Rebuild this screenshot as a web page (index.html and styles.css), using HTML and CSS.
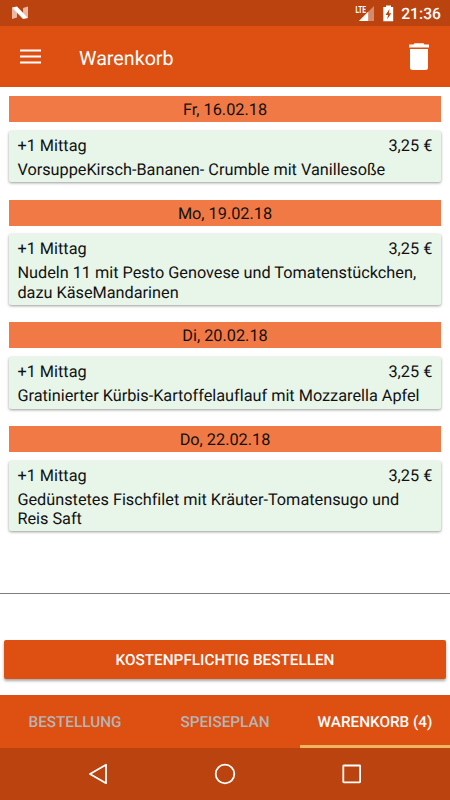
FILE: index.html
```
<!DOCTYPE html>
<html lang="de">
<head>
    <meta charset="UTF-8">
    <meta name="viewport" content="width=device-width, initial-scale=1.0">
    <title>Warenkorb</title>
    <link rel="stylesheet" href="styles.css">
</head>
<body>
    <div class="statusbar">
        <svg class="logo" width="18" height="14" viewBox="0 0 18 14">
            <path d="M1 1.5L6 5V11.5L1 13ZM12 2L17 0.5V12L12 8Z" fill="#e9b9a4"/>
            <path d="M1 1.5L6 0.5L17 12L12 13Z" fill="#fff"/>
        </svg>
        <div class="status-icons">
            <svg width="20" height="17" viewBox="0 0 20 17">
                <path d="M19 1V16H4Z" fill="#d58a6b"/>
                <path d="M13.2 6.8V16H4Z" fill="#fff"/>
                <text class="lte" x="0.5" y="8" textLength="10.5" lengthAdjust="spacingAndGlyphs">LTE</text>
            </svg>
            <svg class="battery" width="11" height="17" viewBox="0 0 11 17">
                <path d="M3 0.5H8V2H10.2V16.3H0.3V2H3Z" fill="#fff"/>
                <path d="M6.5 4L2.5 10H5L4.2 14.3L8.3 8.3H5.9Z" fill="#bb430f"/>
            </svg>
            <span class="time">21:36</span>
        </div>
    </div>

    <header class="toolbar">
        <svg class="menu" width="21" height="15" viewBox="0 0 21 15">
            <path d="M0 1.5H21M0 7.5H21M0 13.5H21" stroke="#fff" stroke-width="2.2"/>
        </svg>
        <h1>Warenkorb</h1>
        <svg class="trash" width="22" height="28" viewBox="0 0 22 28">
            <path d="M1 1.5H5.5L6.5 0.3H15.5L16.5 1.5H21V4.5H1Z" fill="#fff"/>
            <path d="M2 6H20V24.5Q20 27 17.5 27H4.5Q2 27 2 24.5Z" fill="#fff"/>
        </svg>
    </header>

    <main class="cart">
        <section class="day">
            <h2>Fr, 16.02.18</h2>
            <div class="card">
                <div class="row"><span>+1 Mittag</span><span>3,25 €</span></div>
                <p>VorsuppeKirsch-Bananen- Crumble mit Vanillesoße</p>
            </div>
        </section>
        <section class="day">
            <h2>Mo, 19.02.18</h2>
            <div class="card">
                <div class="row"><span>+1 Mittag</span><span>3,25 €</span></div>
                <p>Nudeln 11 mit Pesto Genovese und Tomatenstückchen,<br>dazu KäseMandarinen</p>
            </div>
        </section>
        <section class="day">
            <h2>Di, 20.02.18</h2>
            <div class="card">
                <div class="row"><span>+1 Mittag</span><span>3,25 €</span></div>
                <p>Gratinierter Kürbis-Kartoffelauflauf mit Mozzarella Apfel</p>
            </div>
        </section>
        <section class="day">
            <h2>Do, 22.02.18</h2>
            <div class="card">
                <div class="row"><span>+1 Mittag</span><span>3,25 €</span></div>
                <p>Gedünstetes Fischfilet mit Kräuter-Tomatensugo und<br>Reis Saft</p>
            </div>
        </section>
    </main>

    <div class="order">
        <button type="button">KOSTENPFLICHTIG BESTELLEN</button>
    </div>

    <nav class="tabs">
        <div class="tab">BESTELLUNG</div>
        <div class="tab">SPEISEPLAN</div>
        <div class="tab active">WARENKORB (4)</div>
    </nav>

    <div class="navbar">
        <svg width="22" height="22" viewBox="0 0 22 22">
            <path d="M19 1.8V20.2L3 11Z"/>
        </svg>
        <svg width="22" height="22" viewBox="0 0 22 22">
            <circle cx="11" cy="11" r="9.3"/>
        </svg>
        <svg width="22" height="22" viewBox="0 0 22 22">
            <rect x="2.3" y="2.5" width="16.8" height="16.8" rx="0.5"/>
        </svg>
    </div>
</body>
</html>
```
FILE: styles.css
```
* {
    box-sizing: border-box;
}

body {
    margin: 0;
    height: 800px;
    display: flex;
    flex-direction: column;
    overflow: hidden;
    background-color: #fff;
    color: #111;
    font-family: Roboto, sans-serif;
    font-size: 16.3px;
    text-rendering: geometricPrecision;
}

h1, h2, p {
    margin: 0;
    font-weight: normal;
}

svg {
    display: block;
    flex: none;
}

.statusbar {
    height: 26px;
    flex: none;
    display: flex;
    align-items: center;
    justify-content: space-between;
    padding: 0 9px 0 11px;
    background-color: #bb430f;
    color: #fff;
}

.status-icons {
    display: flex;
    align-items: center;
}

.lte {
    font-size: 10px;
    font-weight: bold;
    fill: #fff;
}

.battery {
    margin: 0 7px 0 8px;
}

.time {
    font-size: 15.7px;
    font-weight: 500;
    line-height: 20px;
    padding-top: 2px;
}

.toolbar {
    height: 61px;
    flex: none;
    display: flex;
    align-items: center;
    padding: 0 20px;
    background-color: #de4f12;
    color: #fff;
}

.toolbar h1 {
    flex: 1;
    margin-left: 38px;
    font-size: 19.7px;
    padding-top: 3px;
}

.cart {
    height: 507px;
    flex: none;
    padding: 9.3px 9px 0;
    border-bottom: 1px solid #7d7d7d;
}

.day {
    margin-bottom: 17.3px;
}

.day h2 {
    height: 26px;
    margin-bottom: 8.7px;
    background-color: #f17945;
    font-size: 16.3px;
    line-height: 28px;
    text-align: center;
}

.card {
    padding: 5px 8.7px 3.3px 8.4px;
    border-radius: 2px;
    background-color: #e8f5e9;
    box-shadow: 0 1px 3px rgba(0, 0, 0, 0.4);
    line-height: 19.2px;
}

.row {
    display: flex;
    justify-content: space-between;
    margin-bottom: 4.8px;
}

.card p {
    letter-spacing: -0.01px;
    white-space: nowrap;
}

.order {
    flex: 1;
    padding: 46px 4px 0;
}

.order button {
    display: block;
    width: 100%;
    height: 39px;
    padding: 1px 0 0;
    border: none;
    border-radius: 2px;
    background-color: #de4f12;
    box-shadow: 0 2px 3px rgba(0, 0, 0, 0.35);
    color: #fff;
    font: 500 15.3px Roboto, sans-serif;
    text-rendering: inherit;
}

.tabs {
    height: 53px;
    flex: none;
    display: flex;
    background-color: #de4f12;
}

.tab {
    flex: 1;
    padding-top: 1px;
    border-bottom: 3px solid transparent;
    color: #b5b5b5;
    font-size: 15.3px;
    font-weight: 500;
    line-height: 53px;
    text-align: center;
    white-space: nowrap;
}

.tab.active {
    border-color: #efb660;
    color: #fff;
}

.navbar {
    height: 52px;
    flex: none;
    display: flex;
    align-items: center;
    justify-content: center;
    gap: 105px;
    background-color: #bb430f;
}

.navbar svg {
    fill: none;
    stroke: #fff;
    stroke-width: 1.8;
    stroke-linejoin: round;
}
```
